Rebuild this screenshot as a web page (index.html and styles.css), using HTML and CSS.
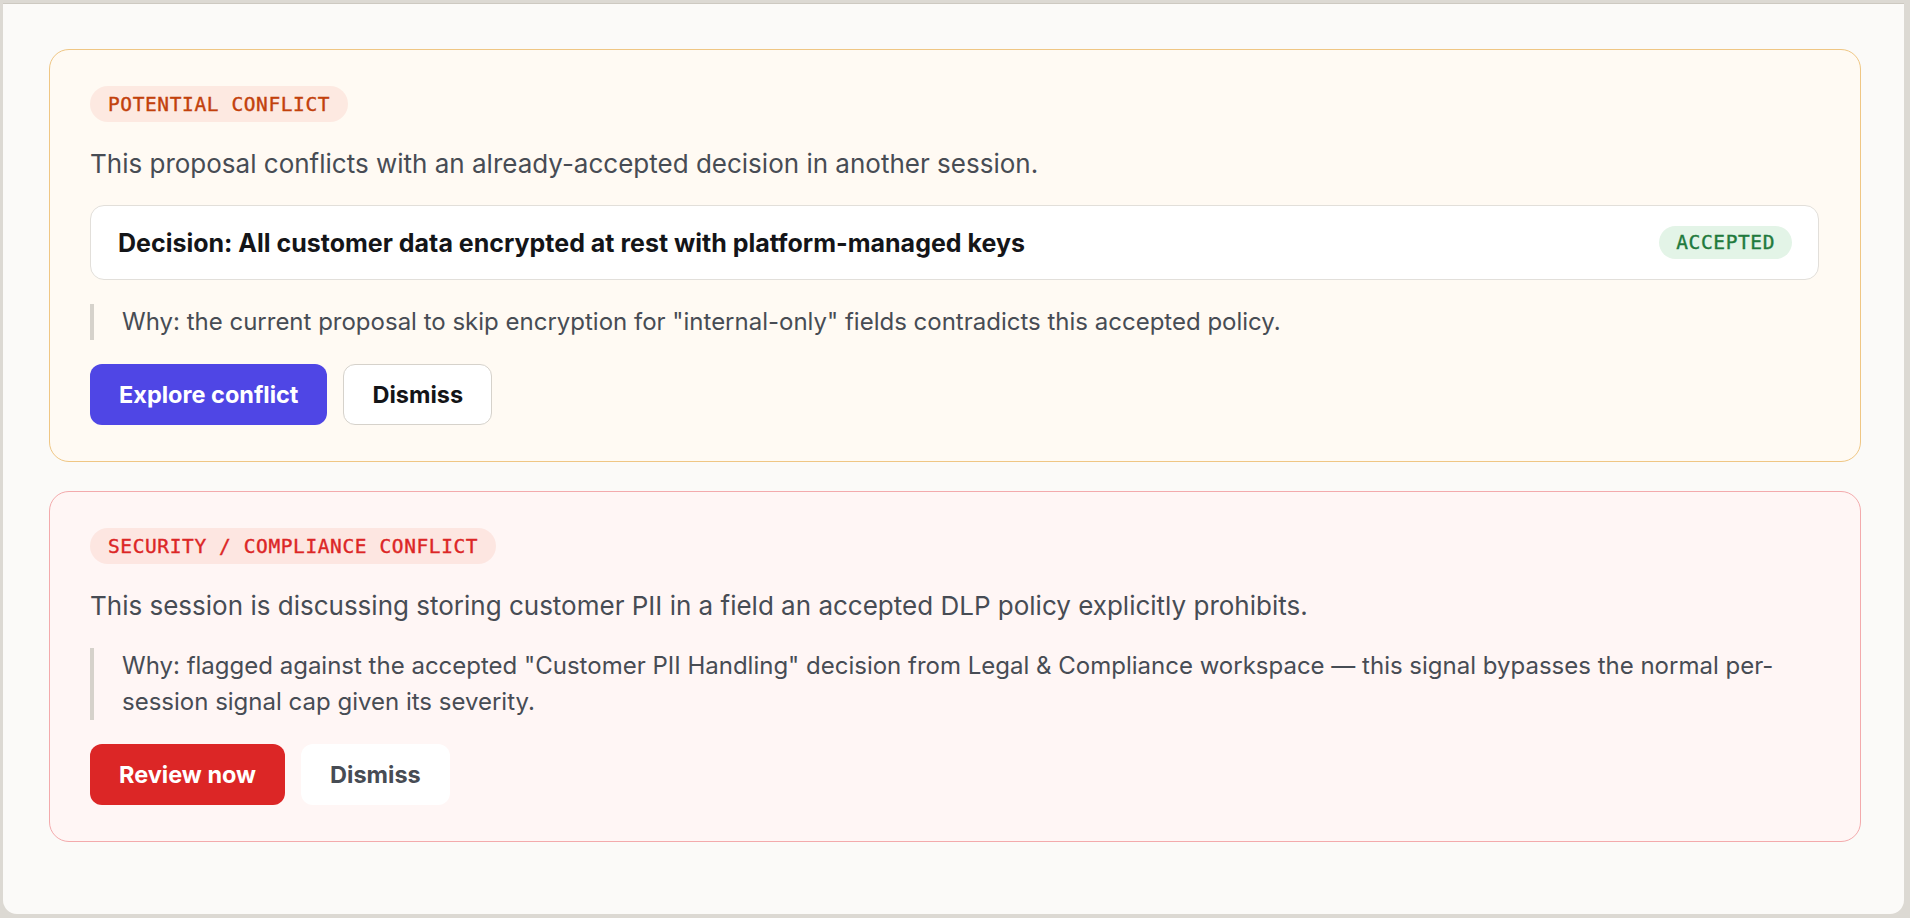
FILE: index.html
```html
<!DOCTYPE html>
<html lang="en">
<head>
<meta charset="utf-8">
<title>Conflict signals</title>
<link rel="stylesheet" href="styles.css">
</head>
<body>
<div class="panel">
  <section class="signal signal--conflict">
    <span class="tag tag--orange">POTENTIAL CONFLICT</span>
    <p class="lead">This proposal conflicts with an already-accepted decision in another session.</p>
    <div class="decision">
      <span class="decision-title">Decision: All customer data encrypted at rest with platform-managed keys</span>
      <span class="tag tag--green">ACCEPTED</span>
    </div>
    <blockquote class="why">Why: the current proposal to skip encryption for "internal-only" fields contradicts this accepted policy.</blockquote>
    <div class="actions">
      <button class="btn btn--primary">Explore conflict</button>
      <button class="btn btn--outline">Dismiss</button>
    </div>
  </section>

  <section class="signal signal--security">
    <span class="tag tag--red">SECURITY / COMPLIANCE CONFLICT</span>
    <p class="lead">This session is discussing storing customer PII in a field an accepted DLP policy explicitly prohibits.</p>
    <blockquote class="why">Why: flagged against the accepted "Customer PII Handling" decision from Legal &amp; Compliance workspace — this signal bypasses the normal per-session signal cap given its severity.</blockquote>
    <div class="actions">
      <button class="btn btn--danger">Review now</button>
      <button class="btn btn--plain">Dismiss</button>
    </div>
  </section>
</div>
</body>
</html>
```

FILE: styles.css
```css
* {
  box-sizing: border-box;
}

html, body {
  margin: 0;
  height: 100%;
}

body {
  background: #dcd9d3;
  font-family: Inter, "Noto Sans", sans-serif;
  color: #474c54;
  overflow: hidden;
}

.panel {
  margin: 3px 6px 0 3px;
  height: 911px;
  background: #fbfaf8;
  border-top: 1px solid #cdc9c1;
  border-radius: 0 0 14px 14px;
  padding: 45px 43px 0 46px;
  display: flex;
  flex-direction: column;
  gap: 29px;
}

.signal {
  border: 1px solid;
  border-radius: 20px;
  padding: 36px 41px 36px 40px;
  display: flex;
  flex-direction: column;
  align-items: flex-start;
  gap: 24px;
}

.signal--conflict {
  background: #fffaf3;
  border-color: #efc684;
}

.signal--security {
  background: #fff6f5;
  border-color: #f3aaac;
}

.tag {
  display: inline-flex;
  align-items: center;
  height: 36px;
  padding: 0 18px;
  border-radius: 18px;
  font-family: "DejaVu Sans Mono", "Liberation Mono", monospace;
  font-size: 19.5px;
  letter-spacing: 0.6px;
  -webkit-text-stroke: 0.4px currentColor;
  white-space: nowrap;
}

.tag--orange {
  background: #fde9e1;
  color: #c2410c;
}

.tag--red {
  background: #fde6e1;
  color: #dc2626;
}

.tag--green {
  height: 33px;
  padding: 0 17px;
  background: #e3f4e7;
  color: #1f7a3d;
}

.lead {
  margin: 0;
  font-size: 26px;
  line-height: 36px;
}

.decision {
  align-self: stretch;
  height: 75px;
  background: #ffffff;
  border: 1px solid #e2dfda;
  border-radius: 14px;
  padding: 0 26px 0 27px;
  display: flex;
  align-items: center;
  justify-content: space-between;
}

.decision-title {
  font-size: 25px;
  font-weight: 700;
  color: #141518;
}

.why {
  margin: 0;
  align-self: stretch;
  border-left: 4px solid #d6d2cb;
  padding-left: 28px;
  font-size: 24px;
  line-height: 36px;
}

.signal--conflict .lead {
  line-height: 35px;
}

.actions {
  display: flex;
  gap: 16px;
}

.btn {
  height: 61px;
  padding: 0 28px;
  border-radius: 12px;
  border: 1px solid transparent;
  font-family: Inter, "Noto Sans", sans-serif;
  font-size: 23.5px;
  font-weight: 700;
  cursor: pointer;
}

.btn--primary {
  background: #4f46e5;
  color: #ffffff;
}

.btn--outline {
  background: #ffffff;
  border-color: #d6d2cb;
  color: #141518;
}

.btn--danger {
  background: #dc2626;
  color: #ffffff;
}

.btn--plain {
  background: #ffffff;
  color: #474c54;
}
```
